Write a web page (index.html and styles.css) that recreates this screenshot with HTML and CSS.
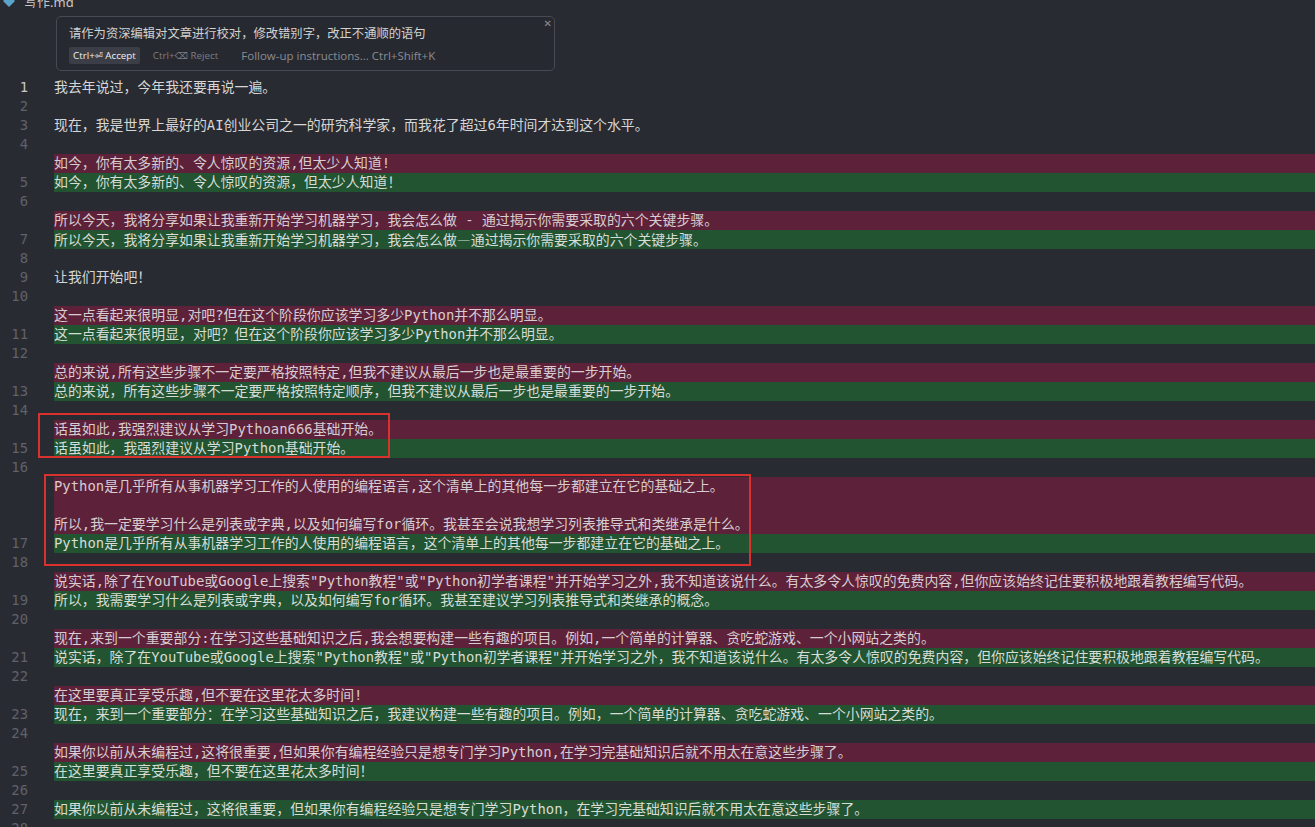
FILE: index.html
```html
<!DOCTYPE html>
<html lang="zh-CN">
<head>
<meta charset="utf-8">
<title>写作.md</title>
<link rel="stylesheet" href="styles.css">
</head>
<body>
<div class="crumbs">
  <svg class="md-icon" width="12" height="12" viewBox="0 0 12 12"><polygon points="6,0 12,6 6,12 0,6" fill="#5aa3c9"/></svg>
  <span class="fname">写作.md</span>
</div>

<div class="widget">
  <div class="prompt">请作为资深编辑对文章进行校对，修改错别字，改正不通顺的语句</div>
  <div class="actions">
    <span class="btn-accept">Ctrl+<span class="sym">⏎</span> Accept</span>
    <span class="btn-reject">Ctrl+<span class="sym">⌫</span> Reject</span>
    <span class="followup">Follow-up instructions... Ctrl+Shift+K</span>
  </div>
  <span class="close">✕</span>
</div>

<div class="editor">
  <div class="row"><span class="ln cur">1</span><span class="code">我去年说过，今年我还要再说一遍。</span></div>
  <div class="row"><span class="ln">2</span><span class="code"></span></div>
  <div class="row"><span class="ln">3</span><span class="code">现在，我是世界上最好的AI创业公司之一的研究科学家，而我花了超过6年时间才达到这个水平。</span></div>
  <div class="row"><span class="ln">4</span><span class="code"></span></div>
  <div class="row del"><span class="ln"></span><span class="code">如今，你有太多新的、令人惊叹的资源,但太少人知道!</span></div>
  <div class="row add"><span class="ln">5</span><span class="code">如今，你有太多新的、令人惊叹的资源，但太少人知道！</span></div>
  <div class="row"><span class="ln">6</span><span class="code"></span></div>
  <div class="row del"><span class="ln"></span><span class="code">所以今天，我将分享如果让我重新开始学习机器学习，我会怎么做 - 通过揭示你需要采取的六个关键步骤。</span></div>
  <div class="row add"><span class="ln">7</span><span class="code">所以今天，我将分享如果让我重新开始学习机器学习，我会怎么做<span class="cjk">—</span>通过揭示你需要采取的六个关键步骤。</span></div>
  <div class="row"><span class="ln">8</span><span class="code"></span></div>
  <div class="row"><span class="ln">9</span><span class="code">让我们开始吧！</span></div>
  <div class="row"><span class="ln">10</span><span class="code"></span></div>
  <div class="row del"><span class="ln"></span><span class="code">这一点看起来很明显,对吧?但在这个阶段你应该学习多少Python并不那么明显。</span></div>
  <div class="row add"><span class="ln">11</span><span class="code">这一点看起来很明显，对吧？但在这个阶段你应该学习多少Python并不那么明显。</span></div>
  <div class="row"><span class="ln">12</span><span class="code"></span></div>
  <div class="row del"><span class="ln"></span><span class="code">总的来说,所有这些步骤不一定要严格按照特定,但我不建议从最后一步也是最重要的一步开始。</span></div>
  <div class="row add"><span class="ln">13</span><span class="code">总的来说，所有这些步骤不一定要严格按照特定顺序，但我不建议从最后一步也是最重要的一步开始。</span></div>
  <div class="row"><span class="ln">14</span><span class="code"></span></div>
  <div class="row del"><span class="ln"></span><span class="code">话虽如此,我强烈建议从学习Pythoan666基础开始。</span></div>
  <div class="row add"><span class="ln">15</span><span class="code">话虽如此，我强烈建议从学习Python基础开始。</span></div>
  <div class="row"><span class="ln">16</span><span class="code"></span></div>
  <div class="row del"><span class="ln"></span><span class="code">Python是几乎所有从事机器学习工作的人使用的编程语言,这个清单上的其他每一步都建立在它的基础之上。</span></div>
  <div class="row del"><span class="ln"></span><span class="code"></span></div>
  <div class="row del"><span class="ln"></span><span class="code">所以,我一定要学习什么是列表或字典,以及如何编写for循环。我甚至会说我想学习列表推导式和类继承是什么。</span></div>
  <div class="row add"><span class="ln">17</span><span class="code">Python是几乎所有从事机器学习工作的人使用的编程语言，这个清单上的其他每一步都建立在它的基础之上。</span></div>
  <div class="row"><span class="ln">18</span><span class="code"></span></div>
  <div class="row del"><span class="ln"></span><span class="code">说实话,除了在YouTube或Google上搜索"Python教程"或"Python初学者课程"并开始学习之外,我不知道该说什么。有太多令人惊叹的免费内容,但你应该始终记住要积极地跟着教程编写代码。</span></div>
  <div class="row add"><span class="ln">19</span><span class="code">所以，我需要学习什么是列表或字典，以及如何编写for循环。我甚至建议学习列表推导式和类继承的概念。</span></div>
  <div class="row"><span class="ln">20</span><span class="code"></span></div>
  <div class="row del"><span class="ln"></span><span class="code">现在,来到一个重要部分:在学习这些基础知识之后,我会想要构建一些有趣的项目。例如,一个简单的计算器、贪吃蛇游戏、一个小网站之类的。</span></div>
  <div class="row add"><span class="ln">21</span><span class="code">说实话，除了在YouTube或Google上搜索"Python教程"或"Python初学者课程"并开始学习之外，我不知道该说什么。有太多令人惊叹的免费内容，但你应该始终记住要积极地跟着教程编写代码。</span></div>
  <div class="row"><span class="ln">22</span><span class="code"></span></div>
  <div class="row del"><span class="ln"></span><span class="code">在这里要真正享受乐趣,但不要在这里花太多时间!</span></div>
  <div class="row add"><span class="ln">23</span><span class="code">现在，来到一个重要部分：在学习这些基础知识之后，我建议构建一些有趣的项目。例如，一个简单的计算器、贪吃蛇游戏、一个小网站之类的。</span></div>
  <div class="row"><span class="ln">24</span><span class="code"></span></div>
  <div class="row del"><span class="ln"></span><span class="code">如果你以前从未编程过,这将很重要,但如果你有编程经验只是想专门学习Python,在学习完基础知识后就不用太在意这些步骤了。</span></div>
  <div class="row add"><span class="ln">25</span><span class="code">在这里要真正享受乐趣，但不要在这里花太多时间！</span></div>
  <div class="row"><span class="ln">26</span><span class="code"></span></div>
  <div class="row add"><span class="ln">27</span><span class="code">如果你以前从未编程过，这将很重要，但如果你有编程经验只是想专门学习Python，在学习完基础知识后就不用太在意这些步骤了。</span></div>
  <div class="row"><span class="ln">28</span><span class="code"></span></div>

  <div class="anno anno-1"></div>
  <div class="anno anno-2"></div>
</div>
</body>
</html>
```

FILE: styles.css
```css
html, body {
  margin: 0;
  padding: 0;
  background: #292b32;
  height: 100%;
  overflow: hidden;
}

body {
  font-family: "Noto Sans", "Noto Sans CJK SC", sans-serif;
  color: #d4d4d4;
}

.crumbs {
  height: 8px;
  overflow: hidden;
  display: flex;
  align-items: flex-end;
  gap: 9px;
  padding-left: 3px;
}

.md-icon {
  flex: none;
  margin-bottom: 1px;
}

.fname {
  font-size: 13px;
  line-height: 16px;
  color: #c8c8c8;
  margin-bottom: -2px;
}

.widget {
  position: relative;
  box-sizing: border-box;
  width: 499px;
  height: 55px;
  margin: 8px 0 0 56px;
  padding: 8px 12px 0 12px;
  border: 1px solid #474a52;
  border-radius: 5px;
  background: #272930;
}

.prompt {
  font-size: 12.3px;
  line-height: 17px;
  color: #d2d2d2;
  font-family: "Noto Sans CJK SC", sans-serif;
}

.actions {
  display: flex;
  align-items: center;
  margin-top: 5px;
  height: 17px;
  font-family: "Open Sans", "DejaVu Sans", sans-serif;
}

.btn-accept {
  height: 17px;
  line-height: 17px;
  padding: 0 4px;
  background: #3b3e46;
  border-radius: 2px;
  color: #eeeeee;
  font-size: 9.8px;
}

.sym {
  font-family: "DejaVu Sans", sans-serif;
  font-size: 9.5px;
}

.btn-reject {
  margin-left: 13px;
  color: #7c7e85;
  font-size: 9.8px;
}

.followup {
  margin-left: 23px;
  color: #8a8c92;
  font-size: 11.5px;
}

.close {
  position: absolute;
  top: 1px;
  right: 2px;
  font-size: 10px;
  color: #8d8f95;
  font-family: "DejaVu Sans", sans-serif;
}

.editor {
  position: relative;
  margin-top: 7px;
}

.row {
  display: flex;
  height: 19px;
  line-height: 19px;
  font-family: "DejaVu Sans Mono", "Noto Sans CJK SC", monospace;
  font-size: 13.9px;
  white-space: pre;
  overflow: hidden;
}

.cjk {
  font-family: "Noto Sans CJK SC", sans-serif;
}

.ln {
  flex: none;
  box-sizing: border-box;
  width: 54px;
  padding-right: 26px;
  text-align: right;
  color: #5f626a;
}

.ln.cur {
  color: #c6c6c6;
}

.code {
  flex: 1;
  color: #d6d6d6;
}

.del .code {
  background: #5d2239;
  color: #d8ccd1;
}

.add .code {
  background: #225431;
  color: #d6dcd6;
}

.anno {
  position: absolute;
  border: 2px solid #d8312e;
  box-sizing: border-box;
}

.anno-1 {
  left: 38px;
  top: 335px;
  width: 352px;
  height: 45px;
}

.anno-2 {
  left: 44px;
  top: 396px;
  width: 707px;
  height: 92px;
}
```
